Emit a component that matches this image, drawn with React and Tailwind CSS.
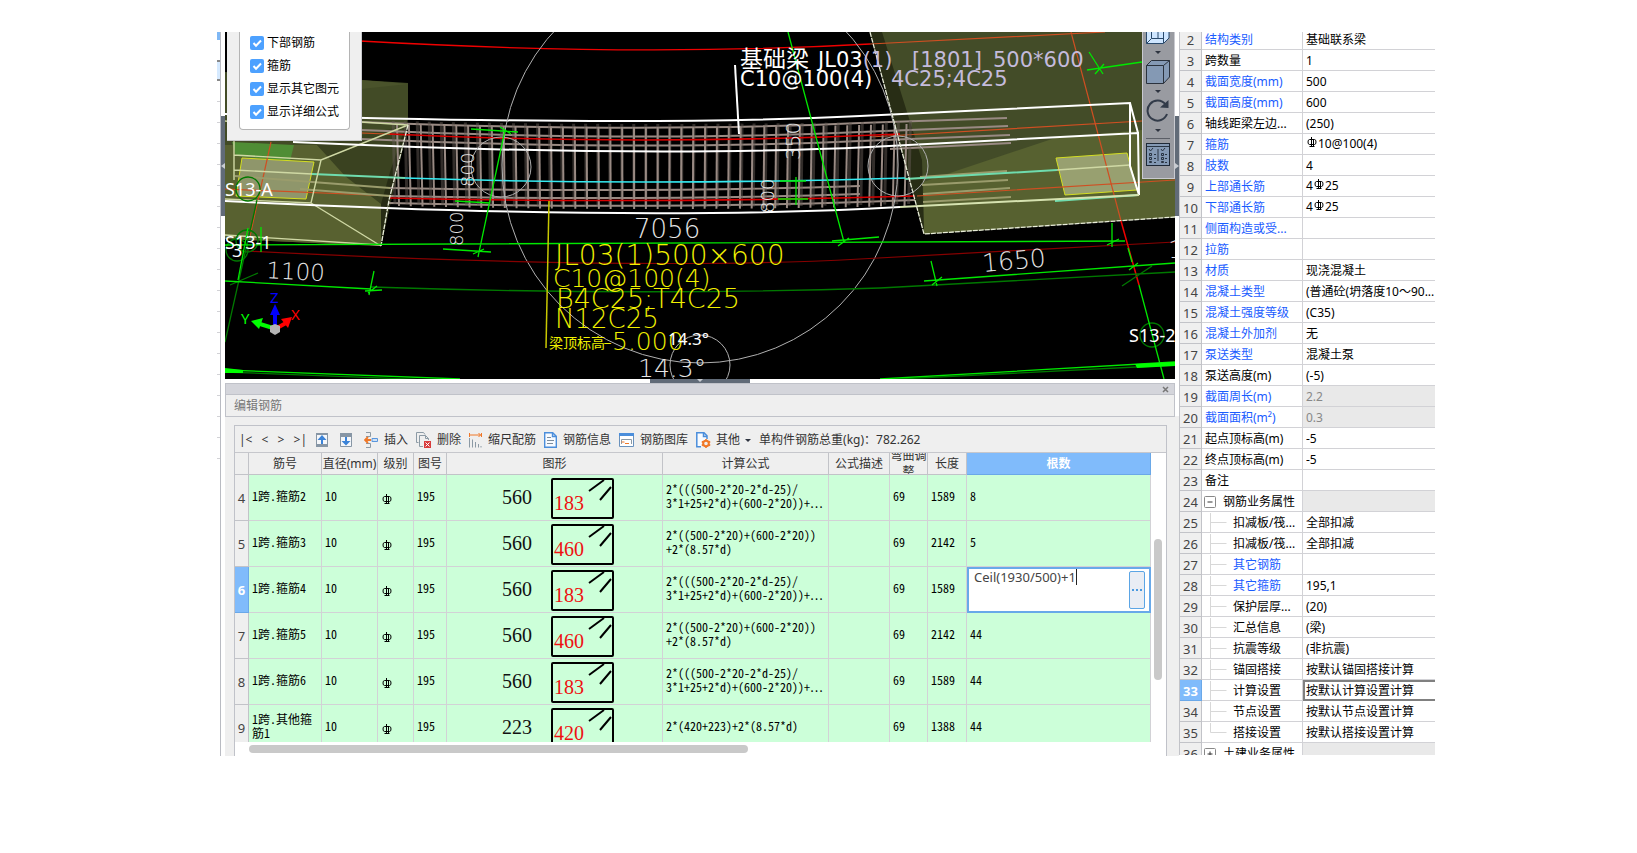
import React from "react";

const CJK = "font-['Noto_Sans','Noto_Sans_CJK_SC',sans-serif]";
const CELL = "font-['Noto_Sans_CJK_SC',sans-serif] [font-feature-settings:'hwid']";

const BLUE = true;
const properties = [
  { n: 2, name: "结构类别", value: "基础联系梁", blue: BLUE },
  { n: 3, name: "跨数量", value: "1" },
  { n: 4, name: "截面宽度(mm)", value: "500", blue: BLUE },
  { n: 5, name: "截面高度(mm)", value: "600", blue: BLUE },
  { n: 6, name: "轴线距梁左边...", value: "(250)" },
  { n: 7, name: "箍筋", rebar: ["", "10@100(4)"], blue: BLUE },
  { n: 8, name: "肢数", value: "4", blue: BLUE },
  { n: 9, name: "上部通长筋", rebar: ["4", "25"], blue: BLUE },
  { n: 10, name: "下部通长筋", rebar: ["4", "25"], blue: BLUE },
  { n: 11, name: "侧面构造或受...", value: "", blue: BLUE },
  { n: 12, name: "拉筋", value: "", blue: BLUE },
  { n: 13, name: "材质", value: "现浇混凝土", blue: BLUE },
  { n: 14, name: "混凝土类型", value: "(普通砼(坍落度10～90...", blue: BLUE },
  { n: 15, name: "混凝土强度等级", value: "(C35)", blue: BLUE },
  { n: 16, name: "混凝土外加剂", value: "无", blue: BLUE },
  { n: 17, name: "泵送类型", value: "混凝土泵", blue: BLUE },
  { n: 18, name: "泵送高度(m)", value: "(-5)" },
  { n: 19, name: "截面周长(m)", value: "2.2", blue: BLUE, locked: true },
  { n: 20, name: "截面面积(m²)", value: "0.3", blue: BLUE, locked: true },
  { n: 21, name: "起点顶标高(m)", value: "-5" },
  { n: 22, name: "终点顶标高(m)", value: "-5" },
  { n: 23, name: "备注", value: "" },
  { n: 24, name: "钢筋业务属性", value: "", group: "minus" },
  { n: 25, name: "扣减板/筏...", value: "全部扣减", child: true },
  { n: 26, name: "扣减板/筏...", value: "全部扣减", child: true },
  { n: 27, name: "其它钢筋", value: "", child: true, blue: BLUE },
  { n: 28, name: "其它箍筋", value: "195,1", child: true, blue: BLUE },
  { n: 29, name: "保护层厚...", value: "(20)", child: true },
  { n: 30, name: "汇总信息", value: "(梁)", child: true },
  { n: 31, name: "抗震等级", value: "(非抗震)", child: true },
  { n: 32, name: "锚固搭接", value: "按默认锚固搭接计算", child: true },
  { n: 33, name: "计算设置", value: "按默认计算设置计算", child: true, active: true },
  { n: 34, name: "节点设置", value: "按默认节点设置计算", child: true },
  { n: 35, name: "搭接设置", value: "按默认搭接设置计算", child: true, last: true },
  { n: 36, name: "土建业务属性", value: "", group: "plus" },
];

const F1 = ["2*(((500-2*20-2*d-25)/", "3*1+25+2*d)+(600-2*20))+…"];
const F2 = ["2*((500-2*20)+(600-2*20))", "+2*(8.57*d)"];
const bars = [
  { n: 4, name: "1跨.箍筋2", h: "560", w: "183", f: F1, len: "1589", count: "8" },
  { n: 5, name: "1跨.箍筋3", h: "560", w: "460", f: F2, len: "2142", count: "5" },
  { n: 6, name: "1跨.箍筋4", h: "560", w: "183", f: F1, len: "1589", editing: true },
  { n: 7, name: "1跨.箍筋5", h: "560", w: "460", f: F2, len: "2142", count: "44" },
  { n: 8, name: "1跨.箍筋6", h: "560", w: "183", f: F1, len: "1589", count: "44" },
  { n: 9, name: "1跨.其他箍筋1", h: "223", w: "420", f: ["2*(420+223)+2*(8.57*d)"], len: "1388", count: "44" },
];

function RebarMark() {
  return (
    <svg className="inline-block h-[10px] w-[10px]" viewBox="0 0 10 10" fill="none" stroke="#000">
      <path d="M2.500 2.500h5q1.500 0 1.500 2.500t-1.500 2.500h-5Q1 7.500 1 5t1.500-2.500zM4.500 0v9.500M6.500 2.500v7M2.500 9.500h5" />
    </svg>
  );
}

function Stirrups() {
  const lines = [];
  for (let i = 0; i < 44; i++) {
    const x = 397 + i * 11.85;
    const d = x - 650;
    const sag = 3 * (1 - (d / 255) ** 2);
    lines.push(<line key={"b" + i} x1={x + d * 0.015} x2={x + d * 0.008} y1={121 + sag} y2={204 + sag} stroke="#63595480" strokeWidth="3" />);
    lines.push(<line key={"f" + i} x1={x} x2={x - d * 0.008} y1={124 + sag} y2={206 + sag} stroke="#998a83" strokeWidth="2" />);
  }
  return <g>{lines}</g>;
}

function Model() {
  return (
    <svg className="block h-[347px] w-full bg-black" viewBox="225 32 950 347" preserveAspectRatio="xMidYMid slice" fill="none" role="img" aria-label="梁钢筋三维">
      <polygon points="225,72 361,80 408,83 408,125 381,246 225,239" fill="#424b26" />
      <polygon points="361,89 408,84 361,80" fill="#4a532b" />
      <polygon points="225,145 317,145 345,172 382,204 381,246 225,239" fill="#586130" />
      <polygon points="317,145 408,125 388,190 381,204 345,176" fill="#3a4220" />
      <polygon points="408,125 408,118 390,172 381,204 381,246" fill="#272c14" />
      <polygon points="232,142 294,145 290,161 236,156" fill="#4f8d35" />
      <polygon points="242,158 314,162 306,199 236,196" fill="#8f966b" stroke="#d4de22" />
      <polygon points="870,32 1175,32 1175,217 924,234" fill="#434c28" />
      <polygon points="923,182 1055,138 1142,130 1175,128 1175,217 924,234" fill="#576130" />
      <polygon points="870,32 882,32 922,160 924,234" fill="#282d15" />
      <polygon points="1056,158 1127,153 1137,190 1065,195" fill="#98a070" stroke="#d4de22" />

      <path d="M360 41Q640 57 870 44" stroke="#f00000" strokeWidth="1.3" />
      <path d="M870 44L1105 32M362 133L408 135M1071 32L1121 221M870 137L1142 121M917 196L1175 180M225 189L395 196M271 142L250 236" stroke="#cf4f22" strokeWidth="1.2" />
      <g stroke="#998a83" strokeWidth="2">
        <path d="M361 122Q640 133 860 123M361 130Q640 142 860 132M361 139Q640 151 860 141M389 188Q640 193 860 186M389 196Q640 201 860 194M389 203Q640 209 860 202" />
        <path d="M860 123L1007 118M860 132L1008 126M860 141L1010 135M890 149L1011 143M860 202L915 200" />
      </g>
      <g stroke="#9a9c6c" strokeWidth="2">
        <path d="M920 177L1007 171M922 185L1008 180M923 194L1010 188M923 202L1011 197M235 176L390 188M300 189L390 196" />
      </g>
      <Stirrups />
      <path d="M390 134Q640 146 900 134M390 198Q640 204 915 196" stroke="#d80000" strokeWidth="1.6" />
      <path d="M405 178Q640 186 905 178" stroke="#35eaf0" strokeWidth="1.6" />
      <path d="M312 174L405 178M905 179L1057 170M1055 201L1138 195" stroke="#6fdcae" strokeWidth="2" />
      <path d="M225 121L234 122V180M234 155L321 160L408 125L361 122M321 160L311 203L225 199M234 170L312 174M311 203L381 246M225 235L381 245M1057 170L1130 165" stroke="#cfd8a4" strokeWidth="1.4" />
      <path d="M225 114Q640 127 860 116L1130 103L1138 133" stroke="#fff" strokeWidth="2" />
      <path d="M293 142Q640 158 870 147L1138 133L1139 195L1130 166V103" stroke="#fff" strokeWidth="2" />
      <path d="M225 201Q640 222 900 207" stroke="#fff" strokeWidth="2" />
      <path d="M900 207L1139 195" stroke="#d6e2b0" strokeWidth="2" />
      <path d="M408 125L389 200L381 246M870 32L924 234L1175 217" stroke="#e8ecd8" strokeDasharray="5 1" strokeWidth="1.3" />

      <g stroke="#b0b0b0">
        <circle cx="700" cy="165" r="198" />
        <circle cx="501" cy="167" r="30" />
        <circle cx="898" cy="166" r="30" />
        <circle cx="700" cy="365" r="30" />
      </g>
      <path d="M735 65L739 134" stroke="#fff" strokeWidth="2" />

      <path d="M245 251Q640 271 860 259L1175 242" stroke="#860000" strokeWidth="1.2" />
      <path d="M1121 221L1139 285" stroke="#f00000" strokeWidth="1.5" />
      <g stroke="#007800" strokeWidth="1.3">
        <path d="M371 287Q640 296 880 288L1175 272M257 200L225 342M1122 286L1152 266M230 285L258 273M225 372L460 381M880 380L1175 365" />
        <circle cx="248" cy="189" r="12" /><circle cx="247" cy="241" r="11" /><circle cx="237" cy="250" r="11" /><circle cx="1152" cy="335" r="12" />
      </g>
      <g stroke="#00e800" strokeWidth="1.3">
        <path d="M225 245L1125 241M225 281L371 289M924 281L1175 263M788 32L844 242M505 130L478 257M225 370L460 379M880 379L1175 362M1128 248L1132 262M1139 285L1164 379M248 228L238 280" />
        <path d="M471 129L518 132M500 127L511 134M443 249L491 252M473 254L484 249M455 201L490 203M374 271L369 295M365 291L382 290M368 293L377 286M832 241L879 237M838 246L849 238M796 177V205M780 181H806M778 199H808M931 261L937 286M932 285L942 277M1112 223V247M1107 245L1119 239M1129 270L1138 263M1087 70L1142 62M1089 52L1103 74M1095 74L1104 64M261 227V252" />
      </g>
      <path d="M225 368L243 370V373H225ZM1135 364L1175 362V366L1137 368Z" fill="#00ff00" />
      <path d="M549 201L546 348" stroke="#c8c800" strokeWidth="1.5" />

      <g fontFamily="'DejaVu Sans','Noto Sans CJK SC',sans-serif" fontSize="20" fill="#fff">
        <text x="740" y="67" fontSize="23">基础梁</text>
        <text x="818" y="67" fontSize="21">JL03<tspan fill="#c4bbdc">(1)</tspan></text>
        <text x="912" y="67" fontSize="21" fill="#c4bbdc">[1801]</text>
        <text x="993" y="67" fontSize="21" fill="#c4bbdc">500*600</text>
        <text x="740" y="86" fontSize="21">C10@100(4)</text>
        <text x="891" y="86" fontSize="21" fill="#c4bbdc">4C25;4C25</text>
      </g>
      <g fontFamily="'DejaVu Sans','Noto Sans CJK SC',sans-serif" fontWeight="200" fontSize="25" fill="#e6e6e6">
        <text x="634" y="238" fontSize="26">7056</text>
        <text x="266" y="278" fontSize="23" transform="rotate(3 266 278)">1100</text>
        <text x="983" y="272" fontSize="25" transform="rotate(-5 983 272)">1650</text>
        <text x="1168" y="258">1</text>
        <text x="638" y="377">14.3°</text>
        <text x="463" y="246" fontSize="18" transform="rotate(-90 463 246)">800</text>
        <text x="474" y="187" fontSize="18" transform="rotate(-90 474 187)">800</text>
        <text x="774" y="213" fontSize="18" transform="rotate(-90 774 213)">800</text>
        <text x="800" y="160" fontSize="20" transform="rotate(-90 800 160)">350</text>
      </g>
      <g fontFamily="'DejaVu Sans','Noto Sans CJK SC',sans-serif" fontWeight="200" fontSize="26" fill="#f0f000">
        <text x="555" y="265" fontSize="28">JL03(1)500×600</text>
        <text x="553" y="287" fontSize="25">C10@100(4)</text>
        <text x="556" y="308" fontSize="27">B4C25;T4C25</text>
        <text x="555" y="328" fontSize="26">N12C25</text>
        <text x="603" y="350" fontSize="25">-5.000</text>
        <text x="549" y="348" fontSize="14" fontWeight="400">梁顶标高</text>
      </g>
      <g fontFamily="'Noto Sans',sans-serif" fontSize="18" fill="#fff">
        <text x="225" y="196">S13-A</text>
        <text x="225" y="249">S13-1</text>
        <text x="232" y="257">3</text>
        <text x="1129" y="342">S13-2</text>
        <text x="668" y="345" fontSize="17">14.3°</text>
      </g>
      <g strokeWidth="4">
        <path d="M275 329V313" stroke="#0000ff" /><path d="M270 315L275 304L280 315Z" fill="#0000ff" />
        <path d="M273 328L260 324" stroke="#00ff00" /><path d="M251 321L263 318L259 329Z" fill="#00ff00" />
        <path d="M277 328L286 323" stroke="#ff0000" /><path d="M281 319L292 317L288 328Z" fill="#ff0000" />
        <path d="M270 326L275 324L280 326V332L275 335L270 332Z" fill="#b4b4b4" />
      </g>
      <g fontFamily="'Noto Sans',sans-serif" fontSize="15">
        <text x="270" y="303" fill="#0000ff">Z</text>
        <text x="241" y="324" fill="#00ff00">Y</text>
        <text x="291" y="320" fill="#ff0000">X</text>
      </g>
    </svg>
  );
}

function DisplayOptions() {
  return (
    <div className="absolute top-0 left-[2px] h-[109px] w-[135px] border-r border-b border-[#c8c8cc] bg-[#efefef] pl-3">
      <fieldset className="flex h-[98px] w-[111px] flex-col gap-[9px] rounded-b border border-t-0 border-[#b4b4b4] bg-white pt-1 pl-[10px]">
        {["下部钢筋", "箍筋", "显示其它图元", "显示详细公式"].map((label) => (
          <label key={label} className="flex h-[14px] items-center gap-[3px] text-[12px] leading-[14px] whitespace-nowrap text-black">
            <span className="grid size-[14px] place-items-center">
              <input type="checkbox" defaultChecked className="col-start-1 row-start-1 size-[14px] appearance-none rounded-[2px] bg-[#4da1ff]" />
              <svg className="pointer-events-none col-start-1 row-start-1 size-[14px]" viewBox="0 0 14 14" fill="none" stroke="#fff" strokeWidth="2"><path d="M3.500 7l2.500 2.700L11 4.500" /></svg>
            </span>
            {label}
          </label>
        ))}
      </fieldset>
    </div>
  );
}

function Caret() {
  return <svg className="h-[3px] w-[6px]" viewBox="0 0 6 3"><path d="M0 0h6L3 3z" fill="#2e3440" /></svg>;
}

function ViewTools() {
  return (
    <div className="absolute top-0 right-0 flex h-[147px] w-[33px] flex-col items-center border border-t-0 border-[#c9cad0] bg-[#999ba1] pr-[2px]">
      <button aria-label="视图" className="h-[12px] w-6">
        <svg className="h-[12px] w-6" viewBox="0 0 24 12" fill="#cfe6ff" stroke="#2a4a6c"><path d="M.5 0v11.500h17L23 6V0M17.500 11V0M5.500 0v6.500h12M5.500 6.500l-5 5M12 0v6" /></svg>
      </button>
      <div className="mt-[7px] flex"><Caret /></div>
      <button aria-label="立体" className="mt-[6px] size-6">
        <svg className="size-6" viewBox="0 0 24 24" stroke="#2b323d"><path d="M.5 5.500L5.500.5H23.500V17L17.500 23.500H.5Z" fill="#8499b4" /><path d="M.5 5.500h17v18M17.500 5.500l6-5" fill="none" /></svg>
      </button>
      <div className="mt-[6px] flex"><Caret /></div>
      <button aria-label="旋转" className="mt-[6px] size-6">
        <svg className="size-6" viewBox="0 0 24 24"><path d="M19.500 5.500A10 10 0 1 0 21 15" fill="none" stroke="#323b49" strokeWidth="2" /><path d="M14 8.500L22.500 9V1Z" fill="#323b49" /></svg>
      </button>
      <div className="mt-[6px] flex"><Caret /></div>
      <div className="mt-[6px] h-px w-6 bg-[#5b5e66]" />
      <button aria-label="显示设置" className="mt-[4px] h-[23px] w-6">
        <svg className="h-[23px] w-6" viewBox="0 0 24 23" fill="none" stroke="#1f2937"><rect x=".5" y=".5" width="23" height="22" fill="#8499b4" /><path d="M.5 3.500h23M12 6v12M3 6l1.500 2L7 5M15 6l1.500 2L19 5M3.500 10.500h2v2h-2zM3.500 14.500h2v2h-2zM3.500 18.500h2v1h-2zM8 11.500h2M8 15.500h2M8 19.500h2M15.500 10.500h2v2h-2zM15.500 14.500h2v2h-2zM15.500 18.500h2v1h-2zM19 11.500h2M19 15.500h2M19 19.500h2" strokeWidth=".9" /></svg>
      </button>
    </div>
  );
}

const icons = {
  up: <svg className="h-[14px] w-3" viewBox="0 0 12 14"><path d="M.5.5h11v13H.5z" fill="#f5f7fa" stroke="#8796a5" /><path d="M0 0h12v2H0zM0 11h12v3H0z" fill="#8796a5" /><path d="M6 2L1.500 7H5v4h2V7h3.500z" fill="#3b83d8" /></svg>,
  down: <svg className="h-[14px] w-3" viewBox="0 0 12 14"><path d="M.5.5h11v13H.5z" fill="#f5f7fa" stroke="#8796a5" /><path d="M0 0h12v4H0z" fill="#8796a5" /><path d="M6 12.500L1.500 8H5V4h2v4h3.500z" fill="#3b83d8" /></svg>,
  insert: <svg className="h-4 w-[14px]" viewBox="0 0 14 16" fill="none"><path d="M2 .5h4.500v4H2M2 11.500h4.500v4H2" stroke="#8c9aa5" /><path d="M1 8h6M4 5L1 8l3 3" stroke="#f07828" strokeWidth="1.800" /><path d="M8 6.500h5.500v3H8z" fill="#cfe2f6" stroke="#5a96dc" /></svg>,
  remove: <svg className="h-4 w-[15px]" viewBox="0 0 15 16" fill="none"><path d="M2.500 10.500h-2V.5h7l1.500 2M3.500 14.500V3.500h6l3 3V8M9.500 3.500v3h3M3.500 14.500H7" stroke="#8c9aa5" /><path d="M8 9h7v7H8z" fill="#d83c3c" /><path d="M9.500 10.500l4 4M13.500 10.500l-4 4" stroke="#fff" /></svg>,
  scale: <svg className="h-4 w-[13px]" viewBox="0 0 13 16" fill="none"><path d="M.5 1v4M12.500 1v4M1 3h11M9.500 1l2 2-2 2" stroke="#f07828" /><path d="M.5 6v9.500M3.500 7.500v8M6.500 10v5.500M9.500 12v3.500M12 14v1.500" stroke="#8c9aa5" /></svg>,
  info: <svg className="h-4 w-[13px]" viewBox="0 0 13 16" fill="none"><path d="M.7.7h8l3.600 3.600v11H.7zM8.500 1v3.500h3.500" stroke="#4b8edb" strokeWidth="1.400" fill="#f8fbff" /><path d="M3 5.500h4M3 8.500h7M3 11.500h6" stroke="#7c8c9c" /></svg>,
  library: <svg className="h-[14px] w-[15px]" viewBox="0 0 15 14" fill="none"><path d="M.5.5h14v13H.5z" fill="#fff" stroke="#6a92bd" /><path d="M0 0h15v3H0z" fill="#4b8edb" /><path d="M2.500 11v-4.500h10V11" stroke="#8c9aa5" /><path d="M2.500 9h3M6 10.500h4" stroke="#f07828" /></svg>,
  other: <svg className="h-4 w-[15px]" viewBox="0 0 15 16" fill="none"><path d="M5 14.800H.8V.8H8l3 3V7M7.500 1v3.500h3.500" stroke="#4b8edb" strokeWidth="1.500" fill="#f8fbff" /><circle cx="10" cy="11.500" r="2.800" stroke="#f07828" strokeWidth="2" /><path d="M10 7v2M10 14v2M5.800 9.500l1.800 1M12.400 12.500l1.800 1M5.800 13.500l1.800-1M12.400 10.500l1.800-1" stroke="#f07828" strokeWidth="1.600" /></svg>,
};

function ToolButton({ icon, children }) {
  return <button className="flex shrink-0 items-center gap-[6px] whitespace-nowrap">{icon}<span>{children}</span></button>;
}

function BarToolbar() {
  return (
    <div className="flex h-[27px] items-center gap-2 border-b border-[#c6c7cc] pt-[2px] pl-1 text-[12px] leading-4 text-[#333]">
      <div className="flex w-[68px] items-center justify-between">
        {["|<", "<", ">", ">|"].map((s) => <button key={s}>{s}</button>)}
      </div>
      <button aria-label="上移" className="ml-px">{icons.up}</button>
      <button aria-label="下移" className="mr-1 ml-1">{icons.down}</button>
      <ToolButton icon={icons.insert}>插入</ToolButton>
      <ToolButton icon={icons.remove}>删除</ToolButton>
      <ToolButton icon={icons.scale}>缩尺配筋</ToolButton>
      <ToolButton icon={icons.info}>钢筋信息</ToolButton>
      <ToolButton icon={icons.library}>钢筋图库</ToolButton>
      <button className="flex shrink-0 items-center gap-[5px]">{icons.other}<span>其他</span><Caret /></button>
      <span className="whitespace-nowrap">单构件钢筋总重(kg)：782.262</span>
    </div>
  );
}

function Shape({ h, w }) {
  return (
    <svg className="block h-[45px] w-full" viewBox="0 0 215 45" fill="none" fontFamily="'Liberation Serif',serif" fontSize="20">
      <text x="55" y="29" fill="#111">{h}</text>
      <rect x="105" y="4" width="61" height="39" rx="1" stroke="#000" strokeWidth="2" />
      <path d="M142 16L157 5M153 25L164 12" stroke="#000" strokeWidth="2" />
      <text x="107" y="35" fill="#ee1111">{w}</text>
    </svg>
  );
}

const HEAD = "border-r border-b border-[#c2c3c8] p-0 font-normal";
const TD = "border-r border-b border-[#d2d2d6] bg-[#ccffd9] pt-0 pb-1 px-[3px]";

function BarTable() {
  return (
    <div className="flex h-[289px] overflow-hidden">
      <div className="min-w-0 flex-1 overflow-hidden">
        <table className="w-full table-fixed border-separate border-spacing-0">
          <colgroup>
            <col className="w-[14px]" /><col className="w-[73px]" /><col className="w-[56px]" /><col className="w-[36px]" /><col className="w-[33px]" />
            <col className="w-[216px]" /><col className="w-[166px]" /><col className="w-[61px]" /><col className="w-[38px]" /><col className="w-[39px]" /><col />
          </colgroup>
          <thead>
            <tr className="bg-[#efefef] text-[12px] text-[#333]">
              {["", "筋号", "直径(mm)", "级别", "图号", "图形", "计算公式", "公式描述", "弯曲调整", "长度"].map((t) => (
                <th key={t} className={HEAD}>
                  <div className="flex h-[21px] items-center justify-center overflow-hidden text-center leading-4">{t}</div>
                </th>
              ))}
              <th className="border-r border-b border-[#6aa8e8] bg-[#80bbfb] p-0 font-bold text-white">
                <div className="h-[21px] leading-[21px]">根数</div>
              </th>
            </tr>
          </thead>
          <tbody>
            {bars.map((b) => (
              <tr key={b.n} className={CELL + " text-[12px] leading-[14px] text-black"}>
                <th className={b.editing
                  ? "border-r border-b border-[#6aa8e8] bg-[#80bbfb] p-0 text-center font-['Noto_Sans',sans-serif] text-[13px] font-bold text-white"
                  : "border-r border-b border-[#c2c3c8] bg-[#efefef] p-0 text-center font-['Noto_Sans',sans-serif] text-[13px] font-normal text-[#444]"}>{b.n}</th>
                <td className={TD}>{b.name}</td>
                <td className={TD}>10</td>
                <td className="border-r border-b border-[#d2d2d6] bg-[#ccffd9] p-0 pl-1"><RebarMark /></td>
                <td className={TD}>195</td>
                <td className="border-r border-b border-[#d2d2d6] bg-[#ccffd9] p-0"><Shape h={b.h} w={b.w} /></td>
                <td className={TD + " whitespace-nowrap"}>{b.f.map((l) => <div key={l}>{l}</div>)}</td>
                <td className={TD} />
                <td className={TD}>69</td>
                <td className={TD}>{b.len}</td>
                {b.editing ? (
                  <td className="border-2 border-[#68a9e9] bg-white p-0">
                    <div className={"flex h-[42px] items-start justify-between pr-1 pl-[5px] " + CJK}>
                      <input aria-label="根数" defaultValue="Ceil(1930/500)+1" className="h-4 border-r border-[#222] text-[13px] leading-4 text-[#444] outline-none [field-sizing:content] [font-feature-settings:normal]" />
                      <button aria-label="编辑" className="mt-[2px] flex h-[38px] w-4 items-center justify-center rounded-[2px] border border-[#5ba5e5] bg-[#e9edf4]">
                        <svg className="h-[2px] w-[10px]" viewBox="0 0 10 2" fill="#4a9ae0"><path d="M0 0h2v2H0zM4 0h2v2H4zM8 0h2v2H8z" /></svg>
                      </button>
                    </div>
                  </td>
                ) : <td className={TD}>{b.count}</td>}
              </tr>
            ))}
          </tbody>
        </table>
      </div>
      <div className="w-[15px] bg-white pt-[86px] pl-[3px]">
        <div className="h-[141px] w-2 rounded-full bg-[#c9c9c9]" />
      </div>
    </div>
  );
}

function PropertyName({ p }) {
  if (p.group) {
    return (
      <div className="flex items-center gap-[7px] pl-[2px]">
        <svg className="size-3 shrink-0" viewBox="0 0 12 12" fill="none" stroke="#333"><rect x=".5" y=".5" width="11" height="11" rx="1" fill="#fff" stroke="#888" /><path d={p.group === "plus" ? "M3.500 6h5M6 3.500v5" : "M3.500 6h5"} /></svg>
        <span>{p.name}</span>
      </div>
    );
  }
  if (p.child) {
    return (
      <div className="flex items-center gap-[6px] pl-2">
        <svg className="h-[21px] w-[17px] shrink-0" viewBox="0 0 17 21" fill="none" stroke="#d8d8d8"><path d={p.last ? "M.5 0v9.500h16" : "M.5 0v21M.5 9.500h16"} /></svg>
        <span>{p.name}</span>
      </div>
    );
  }
  return <div className="pl-[3px]">{p.name}</div>;
}

function PropertyTable() {
  return (
    <div className="h-[723px] w-[256px] shrink-0 overflow-hidden border-l border-[#c2c3c8]">
      <table className="-mt-[3px] w-full table-fixed border-separate border-spacing-0 text-[12px] leading-[22px] whitespace-nowrap">
        <colgroup><col className="w-[22px]" /><col className="w-[101px]" /><col /></colgroup>
        <tbody>
          {properties.map((p) => (
            <tr key={p.n} className="h-[21px]">
              <th className={p.active
                ? "border-r border-b border-[#6aa8e8] bg-[#80bbfb] p-0 text-center text-[13px] font-bold text-white"
                : "border-r border-b border-[#c2c3c8] bg-[#efefef] p-0 text-center text-[13px] font-normal text-[#444]"}>
                <div className="h-5 overflow-hidden">{p.n}</div>
              </th>
              <td className={(p.blue ? "text-[#1a5cff]" : "text-black") + " overflow-hidden border-r border-b border-[#d2d2d6] p-0"}>
                <div className="h-5 overflow-hidden"><PropertyName p={p} /></div>
              </td>
              <td className={
                p.active ? "border-y-2 border-l-2 border-[#808080] p-0 pl-px leading-[18px] text-black"
                  : p.locked ? "border-b border-[#d2d2d6] bg-[#e9e9e9] p-0 pl-[3px] text-[#888]"
                    : p.group ? "border-b border-[#d2d2d6] bg-[#e9e9e9] p-0"
                      : "overflow-hidden border-b border-[#d2d2d6] p-0 pl-[3px] text-black"}>
                {p.active ? <div className="h-[17px] overflow-hidden">{p.value}</div>
                  : p.rebar ? <div className="flex h-5 items-center gap-px"><span>{p.rebar[0]}</span><span className="flex pb-1"><RebarMark /></span><span>{p.rebar[1]}</span></div>
                    : <div className="h-5 overflow-hidden">{p.value}</div>}
              </td>
            </tr>
          ))}
        </tbody>
      </table>
    </div>
  );
}

function LeftEdge() {
  return (
    <div className="flex w-2 shrink-0">
      <div className="w-[3px]">
        <div className="h-[8px] bg-[#7fb8f5]" />
        <div className="mt-[20px] h-[21px] border-y-2 border-[#888] bg-[#d6eaff]" />
        {Array.from({ length: 18 }, (_, i) => <div key={i} className="h-[21px] border-b border-[#d2d2d6]" />)}
      </div>
      <div className="w-px bg-[#b9bbc2]" />
      <div className="flex-1 pt-[84px]">
        <div className="flex h-[100px] items-center bg-[#616b78]">
          <svg className="h-[6px] w-[4px]" viewBox="0 0 4 6"><path d="M4 0v6L0 3z" fill="#c8ccd2" /></svg>
        </div>
      </div>
    </div>
  );
}

export default function App() {
  return (
    <main className={"bg-white pt-8 pr-[202px] pb-[97px] pl-[217px] " + CJK}>
      <div className="flex overflow-hidden">
        <LeftEdge />
        <div className="flex min-w-0 flex-1 flex-col">
          <section className="relative">
            <Model />
            <DisplayOptions />
            <ViewTools />
          </section>
          <div className="flex h-1 justify-center">
            <div className="flex w-[100px] justify-center bg-[#616b78]">
              <svg className="h-[3px] w-[6px]" viewBox="0 0 6 3"><path d="M0 0h6L3 3z" fill="#c8ccd2" /></svg>
            </div>
          </div>
          <section className="flex-1 bg-[#efefef]">
            <div className="border border-[#c0c2c9]">
              <div className="flex h-[11px] items-center justify-end border-b border-[#c0c2c9] bg-[#d4d5db] pr-[5px]">
                <button aria-label="关闭"><svg className="block size-[7px]" viewBox="0 0 7 7" stroke="#777" strokeWidth="1.500"><path d="M1 1l5 5M6 1L1 6" /></svg></button>
              </div>
              <h2 className="h-[21px] pl-2 text-[12px] leading-[22px] text-[#777]">编辑钢筋</h2>
            </div>
            <div className="mr-2 ml-[9px] pt-2">
              <div className="border border-b-0 border-[#c0c2c9]">
                <BarToolbar />
                <BarTable />
                <div className="h-[14px] bg-white pt-[3px] pl-[14px]">
                  <div className="h-2 w-[499px] rounded-full bg-[#c9c9c9]" />
                </div>
              </div>
            </div>
          </section>
        </div>
        <div className="flex w-1 shrink-0 flex-col pt-[84px]">
          <div className="flex h-[100px] items-center bg-[#616b78]">
            <svg className="h-[6px] w-[4px]" viewBox="0 0 4 6"><path d="M0 0v6l4-3z" fill="#c8ccd2" /></svg>
          </div>
          <div className="h-[200px]" />
          <div className="flex-1 bg-[#efefef]" />
        </div>
        <PropertyTable />
      </div>
    </main>
  );
}
